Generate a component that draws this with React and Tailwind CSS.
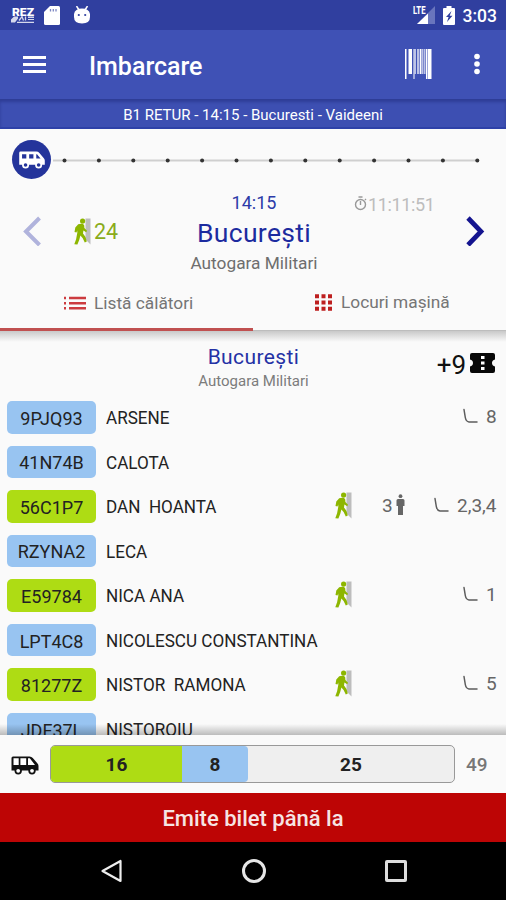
const passengers = [
  { code: "9PJQ93", name: "ARSENE", seats: "8" },
  { code: "41N74B", name: "CALOTA" },
  { code: "56C1P7", name: "DAN  HOANTA", boarded: true, count: 3, seats: "2,3,4" },
  { code: "RZYNA2", name: "LECA" },
  { code: "E59784", name: "NICA ANA", boarded: true, seats: "1" },
  { code: "LPT4C8", name: "NICOLESCU CONSTANTINA" },
  { code: "81277Z", name: "NISTOR  RAMONA", boarded: true, seats: "5" },
  { code: "JDF37L", name: "NISTOROIU" },
];

function Boarding({ className }) {
  return (
    <svg viewBox="0 0 17 27" className={className}>
      <path d="M11.500 0.500h5v26l-5-5z" fill="#bdbdbd" />
      <circle cx="8.600" cy="3" r="2.600" fill="#8db600" />
      <path d="M4.200 6.300 8.600 5.600 10.200 7.200 10.400 10 13 12.800 12.200 14.300 9.400 12.600 9 15.400 11.500 19 12.800 23.600 10.800 24.600 8.600 20 6.400 17.600 5.200 22 3.400 26.400.3 26.200 2.100 21.200 3.300 14.800 3.200 12.400 2.500 14.600.5 14 1.300 9.400z" fill="#8db600" />
    </svg>
  );
}

const smallWindows = "M3.500 3.500h4.500v4.500H3.500zM11 3.500h4.500v4.500H11zM18.500 3.500h.8l3.700 4.500h-4.500z";
const largeWindows = "M2.500 2.200h5.200v6.800H2.500zM9.400 2.200h5.800v6.800H9.400zM17 2.200h1.800l5.200 6.800H17z";

function Van({ className, body, glass, windows }) {
  return (
    <svg viewBox="0 0 28 19" className={className}>
      <path d="M2 0.500H18.500Q20.500.5 21.800 2L26.300 7.300Q27.500 8.500 27.500 10V14.500H0.500V2Q.5.5 2 .5z" fill={body} />
      <path d={windows} fill={glass} />
      <circle cx="7.200" cy="14.800" r="3.700" fill={body} />
      <circle cx="21" cy="14.800" r="3.700" fill={body} />
      <circle cx="7.200" cy="14.800" r="1.900" fill={glass} />
      <circle cx="21" cy="14.800" r="1.900" fill={glass} />
    </svg>
  );
}

function Seat() {
  return (
    <svg viewBox="0 0 15 16" className="h-4 w-[15px]" fill="none" stroke="#5c5c5c" strokeWidth="1.500" strokeLinecap="round">
      <path d="M1 1.500 2.300 9.500Q3 13.500 6 14H14" />
    </svg>
  );
}

function StatusBar() {
  return (
    <div className="flex h-[30px] shrink-0 items-center bg-[#303f9f] pl-[11px] pr-[9px] text-white">
      <svg viewBox="0 0 24 17" className="h-[17px] w-6" fill="#fff" fontWeight="900">
        <text x="1" y="8.500" fontSize="10.500" textLength="22" lengthAdjust="spacingAndGlyphs">REZ</text>
        <path d="M0 15.500V12.500L3 9.500H7V11.500L4 15.500zM17 9.500h6v1.500h-6zM17 12h6v1h-6zM6 14.800h17v1.200H6z" opacity=".8" />
        <path d="M8 13.500 11 9.500l1.500 4M14.500 9.500v4" stroke="#fff" strokeWidth="1.300" fill="none" opacity=".8" />
      </svg>
      <svg viewBox="0 0 16 19" className="ml-[9px] h-[19px] w-4">
        <path d="M6 0h8.500Q16 0 16 1.500v16Q16 19 14.500 19h-13Q0 19 0 17.500V6z" fill="#fff" />
        <path d="M6.500 3v2.500M9.300 3v2.500M12 3v2.500" stroke="#7c86c2" strokeWidth="1.300" />
      </svg>
      <svg viewBox="0 0 16 18" className="ml-[14px] h-[18px] w-4">
        <path d="M2.500 0 5 4M13.500 0 11 4" stroke="#fff" strokeWidth="1.500" />
        <path d="M0 8Q1 2.500 8 2.500T16 8v3Q16 17.500 8 17.500T0 11z" fill="#fff" />
        <circle cx="4.800" cy="9" r="1.100" fill="#303f9f" />
        <circle cx="11.200" cy="9" r="1.100" fill="#303f9f" />
      </svg>
      <div className="ml-auto flex items-center">
        <svg viewBox="0 0 24 20" className="h-5 w-6">
          <path d="M22 1v18H4z" fill="#6975bd" />
          <path d="M15 8.500v10.500H4z" fill="#fff" />
          <text x="0" y="9" fill="#fff" stroke="#303f9f" strokeWidth="1.500" paintOrder="stroke" fontSize="10" fontWeight="800" textLength="12.500" lengthAdjust="spacingAndGlyphs">LTE</text>
        </svg>
        <svg viewBox="0 0 12 19" className="ml-[6px] h-[19px] w-3">
          <path d="M3.500 0h5v2H11q1 0 1 1v15q0 1-1 1H1q-1 0-1-1V3q0-1 1-1h2.500z" fill="#fff" />
          <path d="M8.500 5 3 11h2.600L4 16l5.500-6.200H6.700z" fill="#303f9f" />
        </svg>
        <span className="ml-[8px] mt-[3px] text-[17.500px] font-medium leading-none">3:03</span>
      </div>
    </div>
  );
}

function Toolbar() {
  return (
    <div className="flex h-[69px] shrink-0 items-center bg-[#3f51b5] pl-[23px] pr-[26px] text-white">
      <div className="flex w-[23px] flex-col gap-[4px]">
        <div className="h-[3px] bg-white" />
        <div className="h-[3px] bg-white" />
        <div className="h-[3px] bg-white" />
      </div>
      <div className="ml-[43px] mt-[4px] text-[25px] font-medium leading-none">Imbarcare</div>
      <svg viewBox="0 0 28 31" className="ml-auto h-[31px] w-7" fill="#fff">
        <path d="M1 0h1.500v30H1zM4.500 0H8v25H4.500zM9.500 0h1v30h-1zM16 0h1.500v25H16zM22 0h1.500v30H22zM24 0h3.500v30H24z" />
        <path d="M10.500 0h1.500v25h-1.500zM13 0h2.500v25H13zM18 0h1.500v25H18zM20 0h1.500v25H20z" opacity=".65" />
      </svg>
      <svg viewBox="0 0 6 22" className="ml-[42px] mt-[-1px] h-[22px] w-[6px]" fill="#fff">
        <circle cx="3" cy="3.500" r="2.800" />
        <circle cx="3" cy="11" r="2.800" />
        <circle cx="3" cy="18.500" r="2.800" />
      </svg>
    </div>
  );
}

function Timeline() {
  return (
    <div className="flex h-[61px] items-center pl-3">
      <div className="flex size-[39px] items-center justify-center rounded-full bg-[#24349b]">
        <Van className="h-[18px] w-7" body="#fff" glass="#24349b" windows={smallWindows} />
      </div>
      <svg viewBox="0 0 428 6" className="ml-[2px] h-[6px] w-[428px]">
        <path d="M0 3.500H424" stroke="#cfcfcf" strokeWidth="2" />
        {Array.from({ length: 13 }, (_, i) => (
          <circle key={i} cx={11.5 + i * 34.4} cy="3.500" r="2" fill="#333" />
        ))}
      </svg>
    </div>
  );
}

function Stop() {
  return (
    <div className="grid h-[93px] grid-cols-[170px_168px_168px]">
      <div className="flex items-start pl-[22px] pt-[26px]">
        <svg viewBox="0 0 20 30" className="h-[30px] w-5" fill="none" stroke="#b0b3dc" strokeWidth="4">
          <path d="M17.500 2 4 15.500 17.500 29" />
        </svg>
        <Boarding className="ml-[32px] mt-[2px] h-[27px] w-[17px]" />
        <span className="ml-[3px] mt-[4px] text-[21.500px] leading-[24px] text-[#8aac1c]">24</span>
      </div>
      <div className="flex flex-col items-center whitespace-nowrap">
        <span className="mt-[2px] text-[18px] leading-[22px] text-[#2c3aa8]">14:15</span>
        <span className="mt-[2px] text-[26.500px] leading-[34px] tracking-[0.300px] text-[#1c2b9f]">București</span>
        <span className="mt-[2px] text-[17.300px] leading-[22px] text-[#6e6e6e]">Autogara Militari</span>
      </div>
      <div className="flex flex-col pl-4">
        <div className="mt-[3px] flex h-[22px] items-center">
          <svg viewBox="0 0 13 15" className="mb-[1px] h-[15px] w-[13px]" fill="none" stroke="#999" strokeWidth="1.400">
            <circle cx="6.500" cy="8.500" r="5" />
            <path d="M4.500 1h4M6.500 5v4M11 3l1 1" />
          </svg>
          <span className="ml-[1px] text-[18px] tracking-[-0.350px] text-[#bdbdbd]">11:11:51</span>
        </div>
        <svg viewBox="0 0 20 30" className="ml-[111px] mt-[1px] h-[30px] w-5" fill="none" stroke="#14148f" strokeWidth="4.700">
          <path d="M3 2 16 15.500 3 29" />
        </svg>
      </div>
    </div>
  );
}

function Tabs() {
  return (
    <div className="grid h-[48px] grid-cols-2 text-[17.300px] text-[#757575]">
      <div className="flex items-center border-b-[3px] border-[#c05050] pl-[63px]">
        <svg viewBox="0 0 23 14" className="mt-[-6px] h-[14px] w-[23px]" stroke="#cc3b3f" strokeWidth="2.400">
          <path d="M1 2h2M6 2h17M1 7.200h2M6 7.200h17M1 12.300h2M6 12.300h17" />
        </svg>
        <span className="ml-2 mt-[-4px]">Listă călători</span>
      </div>
      <div className="flex items-center border-b border-[#bdbdbd] pl-[62px]">
        <svg viewBox="0 0 17 17" className="mt-[-8px] size-[17px]" stroke="#bd1f1f" strokeWidth="4">
          <path d="M0 2.200h4M6.500 2.200h4M13 2.200h4M0 8.500h4M6.500 8.500h4M13 8.500h4M0 14.800h4M6.500 14.800h4M13 14.800h4" />
        </svg>
        <span className="ml-[9px] mt-[-7px]">Locuri mașină</span>
      </div>
    </div>
  );
}

function Row({ p }) {
  return (
    <div className="flex h-[44.570px] shrink-0 items-start pl-[7px] pr-[9px]">
      <div className={"flex h-[32.500px] w-[89px] shrink-0 items-center justify-center rounded-[5px] pt-[2px] text-[18px] text-[#222] " + (p.boarded ? "bg-[#aedc14]" : "bg-[#98c4f1]")}>
        {p.code}
      </div>
      <div className="ml-[10px] w-[228px] shrink-0 origin-left scale-x-[0.900] whitespace-pre pt-[2px] text-[19px] leading-[30px] text-[#222]">
        {p.name}
      </div>
      <div className="ml-[1px] w-[17px] shrink-0 pt-[2px]">
        {p.boarded && <Boarding className="h-[27px] w-[17px]" />}
      </div>
      <div className="ml-[30px] flex shrink-0 items-start text-[#666]">
        {p.count && (
          <>
            <span className="w-[11px] text-[19px] leading-[31px]">{p.count}</span>
            <svg viewBox="0 0 9 21" className="ml-[3px] mt-[4px] h-[21px] w-[9px]" fill="#666">
              <circle cx="4.500" cy="2.200" r="1.900" />
              <path d="M2 5h5q1.500 0 1.500 1.500V12H7v9H2v-9H.5V6.500Q.5 5 2 5z" />
            </svg>
          </>
        )}
      </div>
      {p.seats && (
        <div className="ml-auto flex text-[19px] leading-[31px] text-[#666]">
          <div className="pt-[7px]"><Seat /></div>
          <span className={"ml-2 " + (p.seats.length > 1 ? "w-[40px]" : "w-[11px]")}>{p.seats}</span>
        </div>
      )}
    </div>
  );
}

function PassengerList() {
  return (
    <div className="relative flex h-[404px] shrink-0 flex-col overflow-hidden bg-[#fafafa]">
      <div className="absolute inset-x-0 top-0 h-[11px] bg-linear-to-b from-[#c9c9c9] to-transparent" />
      <div className="grid h-[70px] shrink-0 grid-cols-[130px_247px_129px]">
        <div />
        <div className="flex flex-col items-center pt-[12px]">
          <span className="text-[21px] leading-[28px] tracking-[0.400px] text-[#2431a5]">București</span>
          <span className="mt-[1px] text-[15px] leading-[18px] text-[#7c7c7c]">Autogara Militari</span>
        </div>
        <div className="flex items-start justify-end pr-[11px] pt-[18px]">
          <span className="text-[26px] leading-[32px] text-[#111]">+9</span>
          <svg viewBox="0 0 25 20" className="ml-1 mt-[4px] h-5 w-[25px]">
            <path d="M2 0h21q2 0 2 2v4.500q-3 .8-3 3.500t3 3.500V18q0 2-2 2H2q-2 0-2-2v-4.500Q3 12.700 3 10T0 6.500V2Q0 0 2 0z" fill="#080808" />
            <path d="M11 3h3.500v3H11zM11 8.500h3.500v3H11zM11 14h3.500v3H11z" fill="#fff" />
          </svg>
        </div>
      </div>
      {passengers.map((p) => <Row key={p.code} p={p} />)}
      <div className="absolute inset-x-0 bottom-0 h-[11px] bg-linear-to-t from-black/25 to-transparent" />
    </div>
  );
}

function Occupancy() {
  return (
    <div className="flex h-[58px] shrink-0 items-center bg-[#fafafa] pl-[11px] pr-[18px]">
      <Van className="mt-[2px] h-[19px] w-7" body="#111" glass="#fff" windows={largeWindows} />
      <div className="ml-[11px] flex h-[38px] w-[405px] overflow-hidden rounded-[5px] border border-[#999] bg-[#efefef] text-[19px] font-bold text-[#222]">
        <div className="flex w-[131px] items-center justify-center bg-[#aedc14] pt-[3px]">16</div>
        <div className="flex w-[66px] items-center justify-center rounded-r-[4px] bg-[#98c4f1] pt-[3px]">8</div>
        <div className="flex flex-1 items-center justify-center pt-[3px]">25</div>
      </div>
      <span className="ml-[11px] mt-[3px] text-[19px] font-medium text-[#777]">49</span>
    </div>
  );
}

function NavBar() {
  return (
    <div className="flex h-[58px] shrink-0 items-center bg-black pl-[100px]">
      <svg viewBox="0 0 24 26" className="h-[26px] w-6" fill="none" stroke="#eee" strokeWidth="2.200">
        <path d="M20.500 3v20L2.500 13z" strokeLinejoin="round" />
      </svg>
      <div className="ml-[118px] size-[24px] rounded-full border-[3px] border-[#e6e6e6]" />
      <div className="ml-[119px] size-[22px] rounded-[2px] border-[3px] border-[#ddd]" />
    </div>
  );
}

export default function App() {
  return (
    <div className="flex h-[900px] w-[506px] flex-col overflow-hidden bg-[#fafafa] font-[Roboto,sans-serif]">
      <StatusBar />
      <Toolbar />
      <div className="flex h-[30px] shrink-0 items-center justify-center border-b-2 border-[#2e41a8] bg-[#3d4fb2] pt-[4px] text-[15px] text-white shadow-[inset_0_3px_3px_rgba(20,30,100,0.35)]">
        B1 RETUR - 14:15 - Bucuresti - Vaideeni
      </div>
      <div className="flex h-[202px] shrink-0 flex-col">
        <Timeline />
        <Stop />
        <Tabs />
      </div>
      <PassengerList />
      <Occupancy />
      <div className="flex h-[49px] shrink-0 items-center justify-center bg-[#bd0505] pt-[2px] text-[22px] font-medium text-[#f6e4e4]">
        Emite bilet până la
      </div>
      <NavBar />
    </div>
  );
}
